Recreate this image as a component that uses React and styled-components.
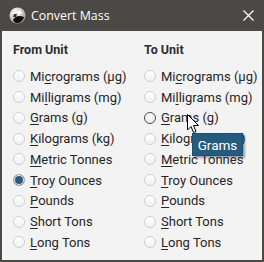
import React from "react";
import styled, { createGlobalStyle } from "styled-components";

const GlobalStyle = createGlobalStyle`
  html, body {
    margin: 0;
    padding: 0;
    background: #4a4946;
  }
  body {
    font-family: Roboto, "Liberation Sans", sans-serif;
  }
`;

const Window = styled.div`
  width: 264px;
  height: 262px;
  box-sizing: border-box;
  border: 2px solid #4a4946;
  border-top: none;
  display: flex;
  flex-direction: column;
  background: #4a4946;
  position: relative;
`;

const TitleBar = styled.div`
  height: 31px;
  display: flex;
  align-items: center;
  padding: 0 8px 0 7px;
  gap: 5px;
  color: #ffffff;
  font-family: "Open Sans", "Noto Sans", sans-serif;
  font-size: 12.4px;
`;

const Title = styled.span`
  flex: 1;
  margin-top: -1px;
`;

const Body = styled.div`
  flex: 1;
  background: #f3f3f3;
  display: grid;
  grid-template-columns: 131px 1fr;
  padding: 10px 0 0 11px;
`;

const Column = styled.div`
  display: flex;
  flex-direction: column;
`;

const GroupTitle = styled.div`
  font-size: 12.5px;
  font-weight: bold;
  color: #2e2e2e;
  height: 21px;
  line-height: 18px;
  margin-bottom: 4px;
`;

const Row = styled.div`
  display: flex;
  align-items: center;
  gap: 5px;
  height: 20.75px;
  font-size: 13px;
  color: #262626;
`;

const Radio = styled.span`
  width: 12px;
  height: 12px;
  box-sizing: border-box;
  border-radius: 50%;
  border: 1px solid ${(p) => (p.$hover ? "#4a4a4a" : p.$checked ? "#a9a9a9" : "#cfcfcf")};
  background: ${(p) => (p.$checked ? "#2b5b7d" : "linear-gradient(#ffffff, #f1f1f1)")};
  box-shadow: ${(p) => (p.$checked ? "inset 0 0 0 1px #f6f6f6" : "none")};
  flex-shrink: 0;
`;

const Key = styled.span`
  text-decoration: underline;
  text-underline-offset: 2px;
`;

const Tooltip = styled.div`
  position: absolute;
  left: 190px;
  top: 133px;
  width: 51px;
  height: 23px;
  box-sizing: border-box;
  background: #255c7e;
  color: #ffffff;
  font-size: 13.5px;
  display: flex;
  align-items: center;
  justify-content: center;
  box-shadow: 2px 2px 2px rgba(0, 0, 0, 0.35);
  border: 1px solid #1f4f6e;
`;

const Cursor = styled.svg`
  position: absolute;
  left: 185px;
  top: 114px;
`;

const units = [
  ["Mi", "c", "rograms (μg)"],
  ["Mi", "l", "ligrams (mg)"],
  ["", "G", "rams (g)"],
  ["", "K", "ilograms (kg)"],
  ["", "M", "etric Tonnes"],
  ["", "T", "roy Ounces"],
  ["", "P", "ounds"],
  ["", "S", "hort Tons"],
  ["", "L", "ong Tons"],
];

const AppIcon = () => (
  <svg width="17" height="17" viewBox="0 0 17 17">
    <defs>
      <radialGradient id="ig" cx="0.35" cy="0.3" r="0.8">
        <stop offset="0" stopColor="#ffffff" />
        <stop offset="1" stopColor="#9a9a9a" />
      </radialGradient>
    </defs>
    <circle cx="8.5" cy="8.5" r="8" fill="url(#ig)" />
    <path d="M4 13 C6 9 10 8 15 10 C14 14 11 16 8 16 C6 16 5 15 4 13 Z" fill="#111" />
    <path d="M8 5 L11 3 L13 6 L10 8 Z" fill="#ffffff" />
    <path d="M5 7 L8 7 L7 10 L4 10 Z" fill="#333" />
  </svg>
);

const UnitColumn = ({ title, checked, hover }) => (
  <Column>
    <GroupTitle>{title}</GroupTitle>
    {units.map(([a, k, b], i) => (
      <Row key={i}>
        <Radio $checked={checked === i} $hover={hover === i} />
        <span>
          {a}
          <Key>{k}</Key>
          {b}
        </span>
      </Row>
    ))}
  </Column>
);

export default function App() {
  return (
    <>
      <GlobalStyle />
      <Window>
        <TitleBar>
          <AppIcon />
          <Title>Convert Mass</Title>
          <svg width="11" height="11" viewBox="0 0 11 11">
            <path d="M0.5 0.5 L10.5 10.5 M10.5 0.5 L0.5 10.5" stroke="#ffffff" strokeWidth="1.2" />
          </svg>
        </TitleBar>
        <Body>
          <UnitColumn title="From Unit" checked={5} />
          <UnitColumn title="To Unit" hover={2} />
        </Body>
        <Tooltip>Grams</Tooltip>
        <Cursor width="13" height="20" viewBox="0 0 13 20">
          <path d="M0.5 0.5 L0.5 16 L4 12.5 L6.5 18.5 L9 17.5 L6.5 11.5 L11.5 11.5 Z" fill="#ffffff" stroke="#000000" strokeWidth="1" strokeLinejoin="round" />
        </Cursor>
      </Window>
    </>
  );
}
